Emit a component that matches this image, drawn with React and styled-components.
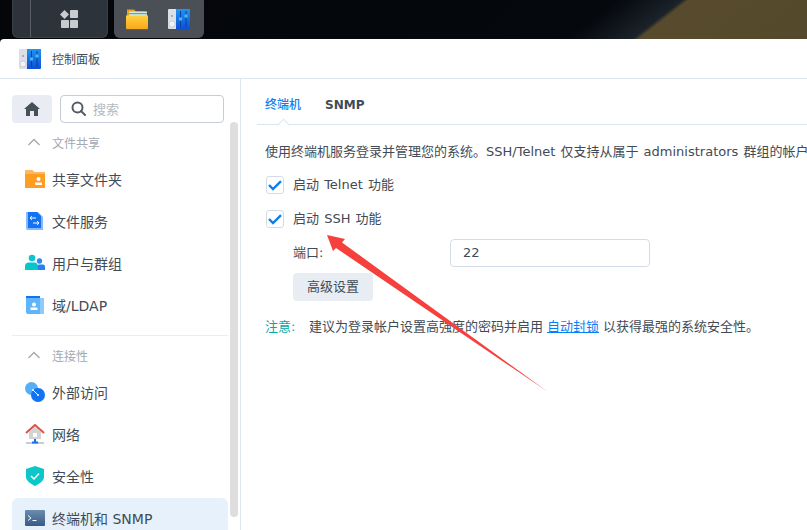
import React from 'react';
import styled, { createGlobalStyle } from 'styled-components';

const GlobalStyle = createGlobalStyle`
  html, body {
    margin: 0;
    padding: 0;
    background: #000;
  }
  body {
    width: 807px;
    height: 530px;
    overflow: hidden;
    font-family: "DejaVu Sans", "Noto Sans CJK SC", sans-serif;
  }
`;

const Page = styled.div`
  position: relative;
  width: 807px;
  height: 530px;
  overflow: hidden;
  display: flex;
  flex-direction: column;
`;

const Taskbar = styled.div`
  height: 39px;
  flex: none;
  display: flex;
  gap: 6px;
  padding-left: 12px;
  box-sizing: border-box;
  background: linear-gradient(142deg, #04060a 0%, #05080d 72%, #1b222a 79.6%, #584b2d 80.4%, #54492c 100%);
`;

const TaskGroup = styled.div`
  height: 38px;
  display: flex;
  align-items: center;
  box-sizing: border-box;
  border-radius: 0 0 6px 6px;
  background: ${props => (props.active ? '#4b5057' : '#2d333b')};
  border: 1px solid ${props => (props.active ? '#4b5057' : '#3a4048')};
  border-top: none;
`;

const StartGroup = styled(TaskGroup)`
  width: 96px;
  padding-left: 17px;
`;

const OpenGroup = styled(TaskGroup)`
  width: 90px;
  padding-left: 10px;
  gap: 18px;
`;

const Separator = styled.span`
  width: 1px;
  height: 37px;
  background: #5b6067;
  margin-right: 28px;
`;

const Window = styled.div`
  flex: 1;
  min-height: 0;
  display: flex;
  flex-direction: column;
  background: #fff;
  border-radius: 4px 0 0 0;
`;

const TitleBar = styled.div`
  height: 40px;
  flex: none;
  box-sizing: border-box;
  border-bottom: 1px solid #dfe6ed;
  display: flex;
  align-items: center;
  gap: 10px;
  padding-left: 18px;
  font-size: 12px;
  color: #414b55;
`;

const Main = styled.div`
  flex: 1;
  min-height: 0;
  display: flex;
`;

const Sidebar = styled.div`
  position: relative;
  width: 241px;
  flex: none;
  box-sizing: border-box;
  border-right: 1px solid #dfe6ed;
  padding: 16px 12px 0;
  overflow: hidden;
`;

const Scrollbar = styled.div`
  position: absolute;
  left: 230px;
  top: 43px;
  width: 8px;
  height: 395px;
  border-radius: 4px;
  background: #dedede;
`;

const SearchRow = styled.div`
  display: flex;
  gap: 8px;
  width: 212px;
`;

const HomeButton = styled.div`
  width: 40px;
  height: 28px;
  border-radius: 4px;
  background: #e9edf3;
  display: flex;
  align-items: center;
  justify-content: center;
`;

const SearchBox = styled.div`
  width: 164px;
  height: 28px;
  box-sizing: border-box;
  border: 1px solid #c5ccd6;
  border-radius: 4px;
  display: flex;
  align-items: center;
  gap: 7px;
  padding: 0 0 2px 10px;
  font-size: 13px;
  color: #b4bac2;
`;

const SectionHeader = styled.div`
  width: 216px;
  height: 28px;
  margin: 6px 0 2px;
  display: flex;
  align-items: center;
  gap: 12px;
  padding: 0 0 2px 16px;
  box-sizing: border-box;
  font-size: 12px;
  color: #a3a9b1;
`;

const Divider = styled.div`
  width: 216px;
  height: 1px;
  margin-top: 8px;
  background: #e9edf3;
`;

const NavItem = styled.div`
  width: 216px;
  height: 42px;
  box-sizing: border-box;
  display: flex;
  align-items: center;
  gap: 7px;
  padding: 0 0 2px 13px;
  border-radius: 6px;
  font-size: 14px;
  color: #414b55;
  background: ${props => (props.selected ? '#e6f1fc' : 'transparent')};
`;

const Content = styled.div`
  flex: 1;
  min-width: 0;
  overflow: hidden;
  padding-left: 16px;
`;

const Tabs = styled.div`
  position: relative;
  height: 46px;
  box-sizing: border-box;
  border-bottom: 1px solid #dbe3ec;
  padding: 16px 0 0 8px;
  display: flex;
  gap: 24px;
  font-size: 12px;
  line-height: 20px;
`;

const Tab = styled.div`
  color: ${props => (props.active ? '#0a7ff5' : '#414b55')};
  font-weight: ${props => (props.active ? 500 : 700)};
`;

const TabNotch = styled.span`
  position: absolute;
  left: 22px;
  bottom: -1px;
  width: 8px;
  height: 8px;
  background: #fff;
  border-left: 1px solid #dbe3ec;
  border-top: 1px solid #dbe3ec;
  transform: translateY(4.5px) rotate(45deg);
`;

const Body = styled.div`
  padding: 16px 0 0 8px;
  font-size: 13px;
  line-height: 20px;
  word-spacing: 1px;
  color: #414b55;
  white-space: nowrap;
`;

const Description = styled.div`
  position: relative;
  top: 1px;
`;

const CheckList = styled.div`
  margin-top: 7px;
`;

const CheckRow = styled.div`
  height: 34px;
  display: flex;
  align-items: center;
  gap: 9px;
  padding-left: 1px;
`;

const CheckBox = styled.span`
  width: 18px;
  height: 18px;
  box-sizing: border-box;
  border: 1px solid #d3dce6;
  border-radius: 3px;
  display: flex;
  align-items: center;
  justify-content: center;
`;

const PortRow = styled.div`
  margin-top: 3px;
  padding-left: 28px;
  height: 28px;
  display: flex;
  align-items: center;
`;

const PortLabel = styled.span`
  width: 157px;
`;

const PortInput = styled.div`
  width: 200px;
  height: 28px;
  box-sizing: border-box;
  border: 1px solid #d3dce6;
  border-radius: 4px;
  padding-left: 12px;
  line-height: 26px;
`;

const AdvancedButton = styled.div`
  margin: 6px 0 0 28px;
  width: 80px;
  height: 28px;
  border-radius: 4px;
  background: #e8edf4;
  text-align: center;
  line-height: 28px;
`;

const Note = styled.div`
  margin-top: 16px;
  display: flex;
`;

const NoteLabel = styled.span`
  width: 44px;
  color: #00a9a9;
`;

const NoteLink = styled.span`
  color: #0a7ff5;
  text-decoration: underline;
  margin: 0 4px;
`;

const ArrowLayer = styled.svg`
  position: absolute;
  left: 0;
  top: 0;
  pointer-events: none;
`;

const StartIcon = () => (
  <svg width="20" height="20" viewBox="0 0 20 20">
    <path d="M5.5 1 L10 5.5 L5.5 10 L1 5.5 Z" fill="#c9ccce" />
    <rect x="11" y="1" width="8" height="8" rx="0.8" fill="#c9ccce" />
    <rect x="2" y="11" width="8" height="8" rx="0.8" fill="#c9ccce" />
    <rect x="11" y="11" width="8" height="8" rx="0.8" fill="#c9ccce" />
  </svg>
);

const FolderIcon = () => (
  <svg width="24" height="24" viewBox="0 0 24 24">
    <path d="M2 2.5 H9 L11 4.5 H20 V9 H2 Z" fill="#e3a021" />
    <rect x="4" y="4.5" width="18" height="6" fill="#d7e9df" />
    <rect x="4" y="6" width="18" height="1.2" fill="#4fb58f" />
    <path d="M1 8.5 H23 V21 a1 1 0 0 1 -1 1 H2 a1 1 0 0 1 -1 -1 Z" fill="url(#folderFill)" />
    <rect x="1" y="22" width="22" height="1" fill="#8a5a12" />
    <defs>
      <linearGradient id="folderFill" x1="0" y1="0" x2="0" y2="1">
        <stop offset="0" stopColor="#ffd23f" />
        <stop offset="1" stopColor="#fba71b" />
      </linearGradient>
    </defs>
  </svg>
);

const ControlPanelIcon = () => (
  <svg width="24" height="24" viewBox="0 0 24 24">
    <defs>
      <linearGradient id="panelBlue" x1="0" y1="0" x2="0" y2="1">
        <stop offset="0" stopColor="#1e96ee" />
        <stop offset="1" stopColor="#0c50d8" />
      </linearGradient>
    </defs>
    <path d="M1 3 a1 1 0 0 1 1 -1 H9 V22 H2 a1 1 0 0 1 -1 -1 Z" fill="#dcdfe9" />
    <circle cx="5" cy="9" r="0.7" fill="#555" />
    <circle cx="5" cy="17" r="3" fill="#f2f3f6" stroke="#b9bdc9" strokeWidth="0.6" />
    <path d="M9 2 H23 V21 a1 1 0 0 1 -1 1 H9 Z" fill="url(#panelBlue)" />
    <rect x="13" y="4" width="1" height="16" fill="#0b3f9e" />
    <rect x="18.5" y="4" width="1" height="16" fill="#0b3f9e" />
    <circle cx="13.5" cy="12" r="1.7" fill="#55b4f5" />
    <circle cx="19" cy="9" r="1.7" fill="#55b4f5" />
  </svg>
);

const HomeIcon = () => (
  <svg width="16" height="14" viewBox="0 0 16 14">
    <path d="M8 0 L16 7 H14 V14 H10 V9 H6 V14 H2 V7 H0 Z" fill="#465059" />
  </svg>
);

const SearchIcon = () => (
  <svg width="15" height="15" viewBox="0 0 15 15" fill="none" stroke="#535c66" strokeWidth="2">
    <circle cx="6.5" cy="6.5" r="5" />
    <path d="M10 10 L14 14" strokeLinecap="round" />
  </svg>
);

const ChevronUp = () => (
  <svg width="12" height="8" viewBox="0 0 12 8" fill="none" stroke="#a3a9b1" strokeWidth="1.4">
    <path d="M0.5 7 L6 1.5 L11.5 7" />
  </svg>
);

const ShareIcon = () => (
  <svg width="20" height="20" viewBox="0 0 20 20">
    <path d="M0 1 H7 L9 3 H20 V19 H0 Z" fill="#ff9d20" />
    <path d="M0 1 H7 L9 3 H20 V5 H0 Z" fill="#fcb866" />
    <circle cx="13.5" cy="10" r="2" fill="#fff" />
    <rect x="10" y="13.5" width="7" height="2.5" fill="#fff" />
  </svg>
);

const FileServiceIcon = () => (
  <svg width="20" height="20" viewBox="0 0 20 20">
    <path d="M1 1 H13 L18 6 V19 H3 a2 2 0 0 1 -2 -2 Z" fill="#8ab6fb" />
    <path d="M3 1 H12 L16 5 V17 H3 Z" fill="#1272f2" />
    <path d="M5 7 H11 M5 7 L7 5.2 M5 7 L7 8.8 M14 12 H8 M14 12 L12 10.2 M14 12 L12 13.8" stroke="#fff" strokeWidth="1" fill="none" />
  </svg>
);

const UsersIcon = () => (
  <svg width="20" height="20" viewBox="0 0 20 20">
    <circle cx="14.5" cy="8" r="2.7" fill="#2a8af6" />
    <path d="M12 17 V14 a2.5 2.5 0 0 1 2.5 -2.5 H18 a2 2 0 0 1 2 2 V17 Z" fill="#2a7ef2" />
    <circle cx="7" cy="5" r="3.3" fill="#0fc4cc" />
    <path d="M0 17 V13.5 a4 4 0 0 1 4 -4 H9 a4 4 0 0 1 4 4 V17 Z" fill="#05c6cc" />
  </svg>
);

const DomainIcon = () => (
  <svg width="20" height="20" viewBox="0 0 20 20">
    <rect x="1" y="1" width="14" height="3" fill="#1272f2" />
    <path d="M1 3 H19 V19 H3 a2 2 0 0 1 -2 -2 Z" fill="#5fb5fb" />
    <path d="M15 3 H19 V19 H15 Z" fill="#8ecbfc" />
    <circle cx="9" cy="9.5" r="2" fill="#fff" />
    <rect x="5.5" y="12.5" width="7" height="2.5" fill="#fff" />
  </svg>
);

const ExternalIcon = () => (
  <svg width="20" height="20" viewBox="0 0 20 20">
    <circle cx="6.5" cy="6.5" r="6.5" fill="#55aef8" />
    <circle cx="13" cy="13" r="7" fill="#1272f2" />
    <path d="M8 8 L13 13" stroke="#fff" strokeWidth="1" />
    <circle cx="8" cy="8" r="1" fill="#fff" />
    <circle cx="13" cy="13" r="1" fill="#fff" />
  </svg>
);

const NetworkIcon = () => (
  <svg width="20" height="20" viewBox="0 0 20 20">
    <path d="M4 8 L10 3 L16 8 V15 H4 Z" fill="#d3d3d6" />
    <path d="M1 9 L10 1 L19 9" fill="none" stroke="#d9534a" strokeWidth="2" />
    <rect x="8" y="9" width="4" height="4" fill="#fff" />
    <rect x="1" y="18" width="18" height="2" fill="#c9ccd0" />
    <rect x="9" y="15" width="2" height="3" fill="#1272f2" />
    <rect x="7" y="17.5" width="6" height="2" fill="#1272f2" />
  </svg>
);

const ShieldIcon = () => (
  <svg width="20" height="20" viewBox="0 0 20 20">
    <path d="M10 0 L19 3 V11 C19 15 14 18 10 20 C6 18 1 15 1 11 V3 Z" fill="#0cc7c9" />
    <path d="M6 10 L9 13 L14 7.5" fill="none" stroke="#fff" strokeWidth="1.5" />
  </svg>
);

const TerminalIcon = () => (
  <svg width="20" height="16" viewBox="0 0 20 16">
    <defs>
      <linearGradient id="termFill" x1="0" y1="0" x2="0" y2="1">
        <stop offset="0" stopColor="#6c8cad" />
        <stop offset="1" stopColor="#355c88" />
      </linearGradient>
    </defs>
    <rect width="20" height="16" rx="1" fill="url(#termFill)" />
    <path d="M3 5.5 L6 8 L3 10.5" fill="none" stroke="#fff" strokeWidth="1" />
    <rect x="7.5" y="10" width="4" height="1" fill="#fff" />
  </svg>
);

const CheckMark = () => (
  <svg width="14" height="11" viewBox="0 0 14 11" fill="none" stroke="#0a7ff5" strokeWidth="2.4">
    <path d="M1 5 L5 9 L13 1.2" />
  </svg>
);

const navGroups = [
  {
    title: '文件共享',
    items: [
      { label: '共享文件夹', Icon: ShareIcon },
      { label: '文件服务', Icon: FileServiceIcon },
      { label: '用户与群组', Icon: UsersIcon },
      { label: '域/LDAP', Icon: DomainIcon },
    ],
  },
  {
    title: '连接性',
    items: [
      { label: '外部访问', Icon: ExternalIcon },
      { label: '网络', Icon: NetworkIcon },
      { label: '安全性', Icon: ShieldIcon },
      { label: '终端机和 SNMP', Icon: TerminalIcon, selected: true },
    ],
  },
];

const App = () => (
  <Page>
    <GlobalStyle />
    <Taskbar>
      <StartGroup>
        <Separator />
        <StartIcon />
      </StartGroup>
      <OpenGroup active>
        <FolderIcon />
        <ControlPanelIcon />
      </OpenGroup>
    </Taskbar>
    <Window>
      <TitleBar>
        <ControlPanelIcon />
        控制面板
      </TitleBar>
      <Main>
        <Sidebar>
          <Scrollbar />
          <SearchRow>
            <HomeButton><HomeIcon /></HomeButton>
            <SearchBox><SearchIcon />搜索</SearchBox>
          </SearchRow>
          {navGroups.map((group, index) => (
            <div key={group.title}>
              {index > 0 && <Divider />}
              <SectionHeader><ChevronUp />{group.title}</SectionHeader>
              {group.items.map(({ label, Icon, selected }) => (
                <NavItem key={label} selected={selected}>
                  <Icon />
                  {label}
                </NavItem>
              ))}
            </div>
          ))}
        </Sidebar>
        <Content>
          <Tabs>
            <Tab active>终端机</Tab>
            <Tab>SNMP</Tab>
            <TabNotch />
          </Tabs>
          <Body>
            <Description>使用终端机服务登录并管理您的系统。SSH/Telnet 仅支持从属于 administrators 群组的帐户登录。</Description>
            <CheckList>
              <CheckRow><CheckBox><CheckMark /></CheckBox>启动 Telnet 功能</CheckRow>
              <CheckRow><CheckBox><CheckMark /></CheckBox>启动 SSH 功能</CheckRow>
            </CheckList>
            <PortRow>
              <PortLabel>端口:</PortLabel>
              <PortInput>22</PortInput>
            </PortRow>
            <AdvancedButton>高级设置</AdvancedButton>
            <Note>
              <NoteLabel>注意:</NoteLabel>
              建议为登录帐户设置高强度的密码并启用
              <NoteLink>自动封锁</NoteLink>
              以获得最强的系统安全性。
            </Note>
          </Body>
        </Content>
      </Main>
    </Window>
    <ArrowLayer width="807" height="530" viewBox="0 0 807 530">
      <path d="M327 235 L345 239 L342 242.5 L548 392 L336 248 L333 251 Z" fill="#f5403e" />
    </ArrowLayer>
  </Page>
);

export default App;
